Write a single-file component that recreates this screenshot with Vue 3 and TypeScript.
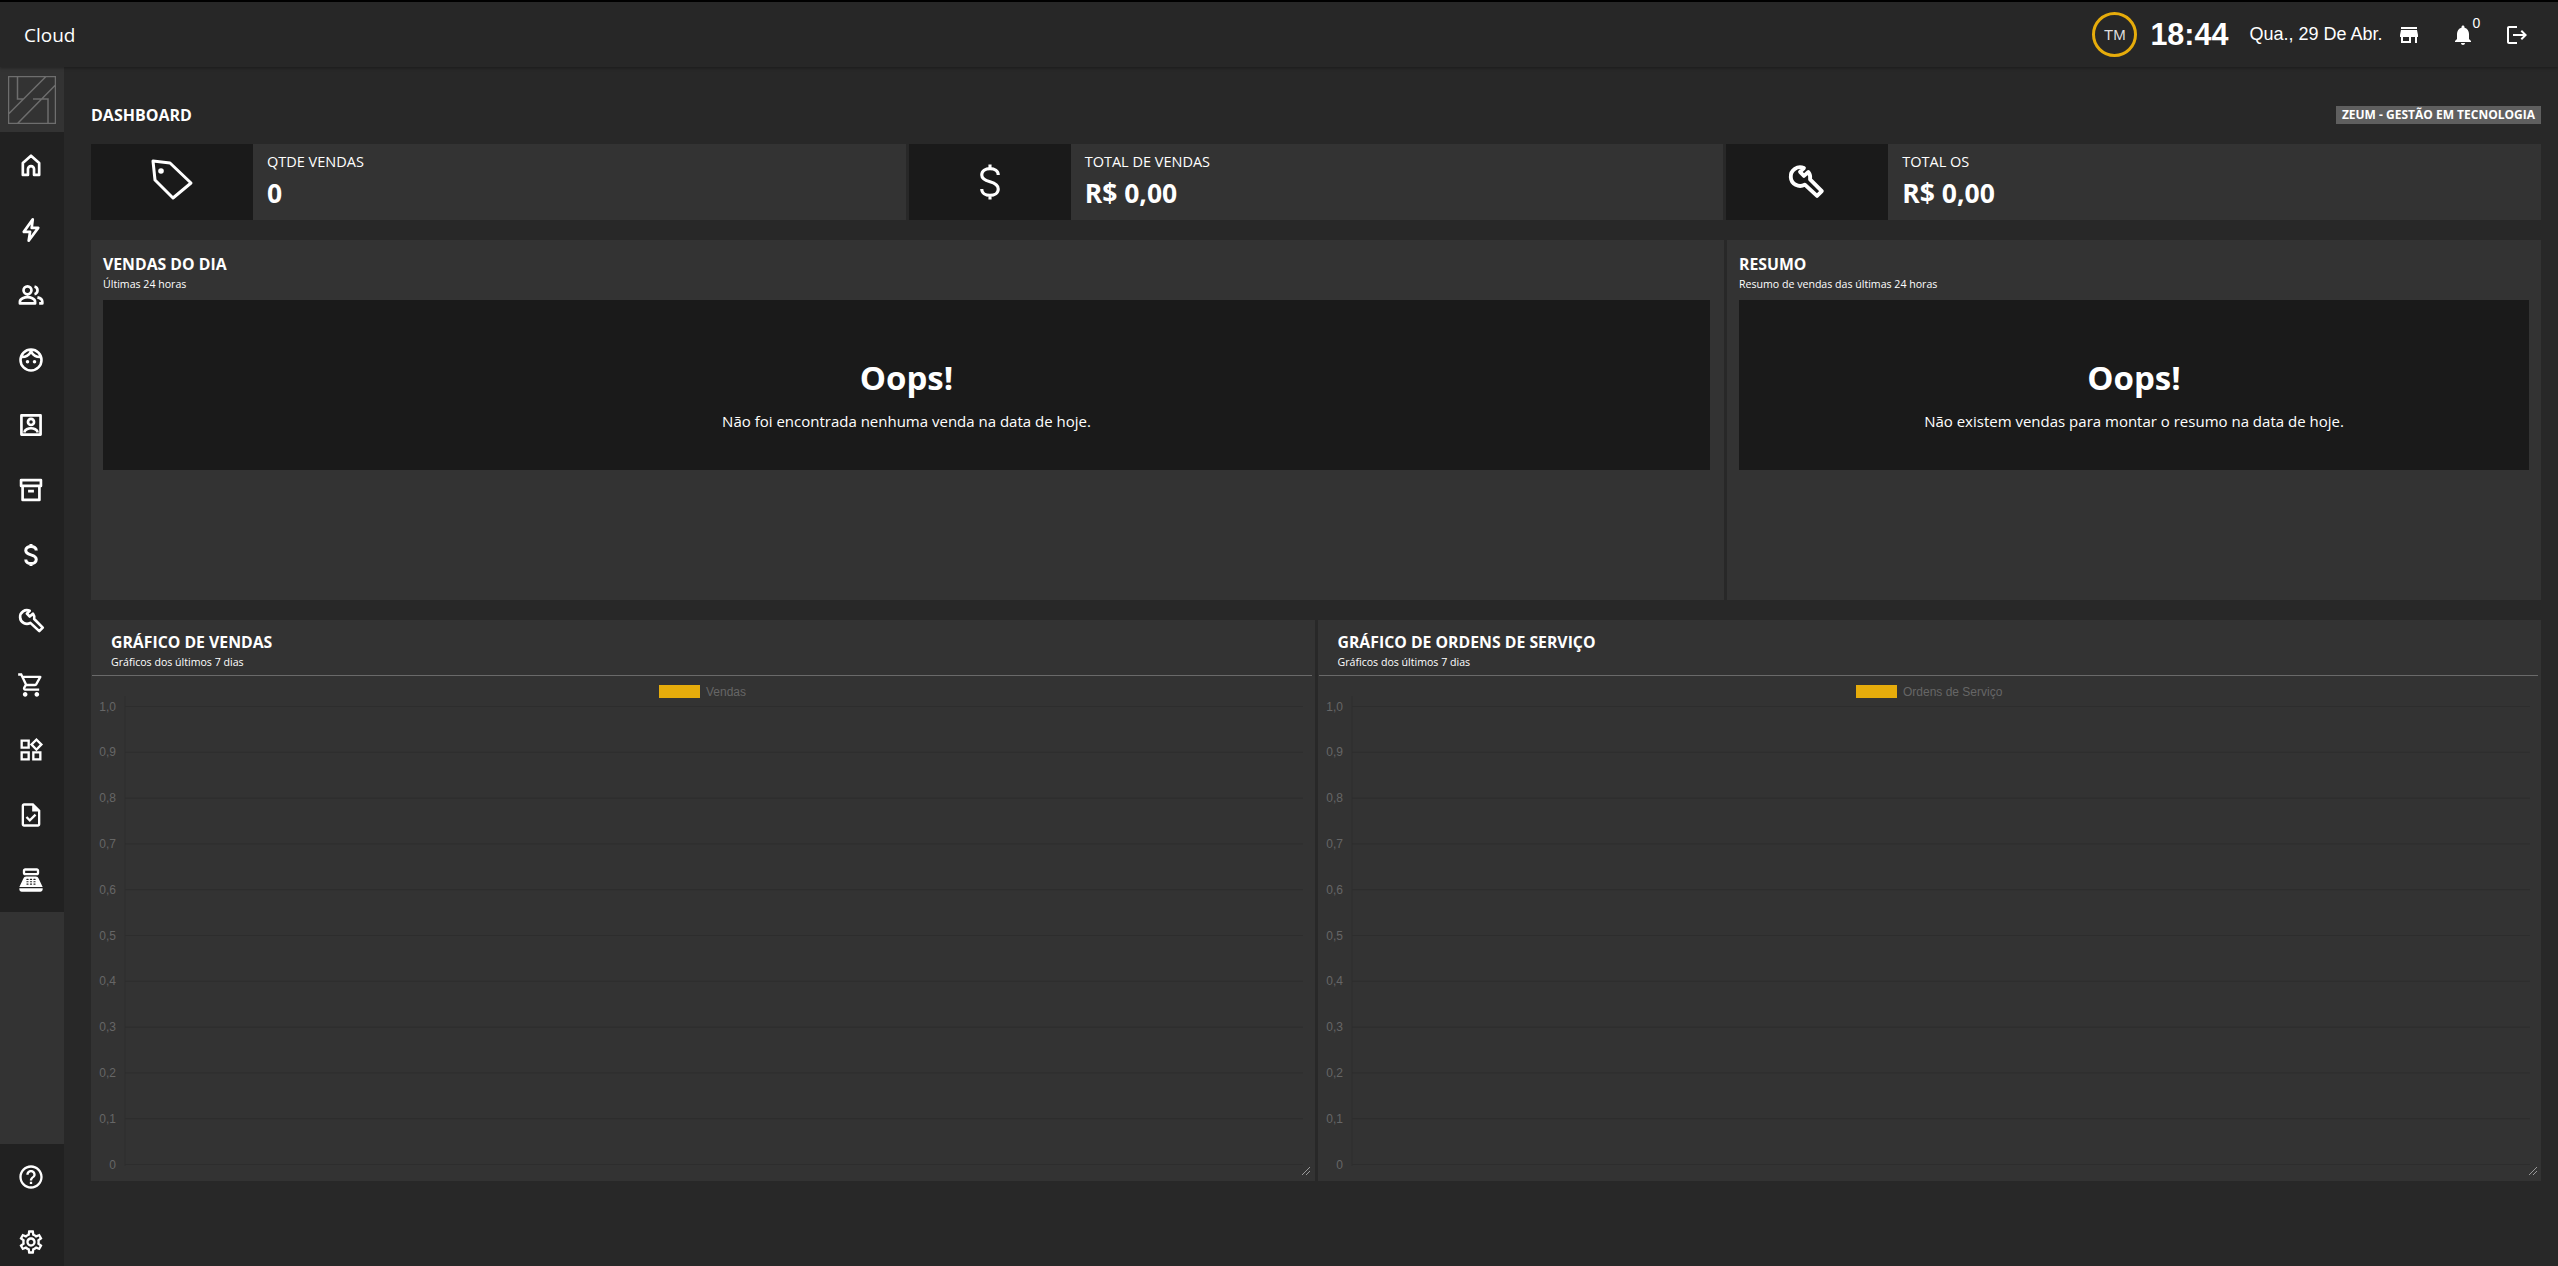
<script setup lang="ts">
interface NavIcon {
  name: string
  box?: string
  d: string
  stroke?: number
  dots?: [number, number, number][]
}

interface StatCard {
  label: string
  value: string
  icon: 'tag' | 'dollar' | 'wrench'
}

interface ChartCard {
  title: string
  legend: string
  swatchX: number
}

const wrenchPath = 'M24 11.500 L19.500 16 L24 20.500 L29 16 A10.700 10.700 0 0 1 31 24.500 L44.500 38 L39 43.500 L25 30.500 A10.700 10.700 0 1 1 24 11.500 Z'
const dollarPath = 'M16.5 8.2c0-2.2-2-3.5-4.5-3.5S7.5 6 7.5 8.2c0 2.2 2 3 4.5 3.7s4.5 1.6 4.5 3.9c0 2.2-2 3.5-4.5 3.5s-4.500-1.3-4.500-3.500M12 2.500v2.200M12 19.300v2.200'

const navTop: NavIcon[] = [
  { name: 'home', d: 'M5 20.500V10.200L12 4l7 6.200v10.300h-4.400V15.500a2.600 2.600 0 0 0-5.200 0v5z', stroke: 2.3 },
  { name: 'bolt', d: 'M13.500 2.800 5.800 13.600h5.400l-1.200 7.600 8.200-11h-5.600z', stroke: 2.3 },
  { name: 'people', d: 'M9 4.600a3.400 3.400 0 1 1 0 6.800 3.400 3.400 0 0 1 0-6.800zM2.500 19.200v-1.400c0-2.600 4.200-4 6.500-4s6.500 1.400 6.500 4v1.400zM15 4.700a3.400 3.400 0 0 1 0 6.600M17.500 14c2.200.5 4.200 1.600 4.200 3.800v1.400h-2.700', stroke: 2.3 },
  { name: 'face', d: 'M12 3a9 9 0 1 1 0 18 9 9 0 0 1 0-18zM4 9.500c3.600 0 6.400-1.500 8-5 1.600 3.500 4.400 5 8 5', stroke: 2.2, dots: [[9, 13.500, 1.500], [15, 13.500, 1.500]] },
  { name: 'portrait', d: 'M3.800 3.800h16.400v16.400H3.800zM12 6.800a2.600 2.600 0 1 1 0 5.200 2.600 2.600 0 0 1 0-5.200zM6.500 18.500v-.7c0-1.800 3.200-3 5.500-3s5.500 1.200 5.500 3v.7', stroke: 2.3 },
  { name: 'archive', d: 'M3.500 3.500h17v5h-17zM4.800 8.500v12h14.400v-12M9.500 13h5', stroke: 2.3 },
  { name: 'money', d: dollarPath, stroke: 2.6 },
  { name: 'wrench', box: '4 4 44 44', d: wrenchPath, stroke: 4.2 },
  { name: 'cart', d: 'M15.55 13c.75 0 1.41-.41 1.75-1.03l3.58-6.49c.37-.66-.11-1.48-.87-1.48H5.21l-.94-2H1v2h2l3.6 7.59-1.35 2.44C4.52 15.37 5.48 17 7 17h12v-2H7l1.1-2h7.45zM6.16 6h12.15l-2.76 5H8.53L6.16 6zM7 18c-1.1 0-1.99.9-1.99 2S5.9 22 7 22s2-.9 2-2-.9-2-2-2zm10 0c-1.1 0-1.99.9-1.99 2s.89 2 1.99 2 2-.9 2-2-.9-2-2-2z' },
  { name: 'widgets', d: 'M16.66 4.52l2.83 2.83-2.83 2.83-2.83-2.83 2.83-2.83M9 5v4H5V5h4m10 10v4h-4v-4h4M9 15v4H5v-4h4m7.66-13.31L11 7.34 16.66 13l5.66-5.66-5.66-5.65zM11 3H3v8h8V3zm10 10h-8v8h8v-8zm-10 0H3v8h8v-8z' },
  { name: 'task', d: 'M14 2H6c-1.1 0-1.99.9-1.99 2L4 20c0 1.1.89 2 1.99 2H18c1.1 0 2-.9 2-2V8l-6-6zm4 18H6V4h7v5h5v11zm-9.18-6.95L7.4 14.46 10.94 18l5.66-5.66-1.41-1.41-4.24 4.24-2.13-2.12z' },
  { name: 'register', d: 'M17 2H7C5.9 2 5 2.9 5 4v2c0 1.1.9 2 2 2h10c1.1 0 2-.9 2-2V4c0-1.1-.9-2-2-2zm0 4H7V4h10v2zm3 16H4c-1.1 0-2-.9-2-2v-1h20v1c0 1.1-.9 2-2 2zm-1.47-11.31C18.21 9.67 17.27 9 16.2 9H7.8c-1.07 0-2.01.67-2.33 1.69L2 18h20l-3.47-7.31zM9.5 16h-1a.5.5 0 0 1 0-1h1a.5.5 0 0 1 0 1zm0-2h-1a.5.5 0 0 1 0-1h1a.5.5 0 0 1 0 1zm0-2h-1a.5.5 0 0 1 0-1h1a.5.5 0 0 1 0 1zm3 4h-1a.5.5 0 0 1 0-1h1a.5.5 0 0 1 0 1zm0-2h-1a.5.5 0 0 1 0-1h1a.5.5 0 0 1 0 1zm0-2h-1a.5.5 0 0 1 0-1h1a.5.5 0 0 1 0 1zm3 4h-1a.5.5 0 0 1 0-1h1a.5.5 0 0 1 0 1zm0-2h-1a.5.5 0 0 1 0-1h1a.5.5 0 0 1 0 1zm0-2h-1a.5.5 0 0 1 0-1h1a.5.5 0 0 1 0 1z' },
]

const navBottom: NavIcon[] = [
  { name: 'help', d: 'M11 18h2v-2h-2v2zm1-16C6.48 2 2 6.48 2 12s4.48 10 10 10 10-4.48 10-10S17.52 2 12 2zm0 18c-4.41 0-8-3.59-8-8s3.59-8 8-8 8 3.59 8 8-3.59 8-8 8zm0-14c-2.21 0-4 1.79-4 4h2c0-1.1.9-2 2-2s2 .9 2 2c0 2-3 1.75-3 5h2c0-2.25 3-2.5 3-5 0-2.21-1.79-4-4-4z' },
  { name: 'settings', d: 'M19.43 12.98c.04-.32.07-.64.07-.98 0-.34-.03-.66-.07-.98l2.11-1.65c.19-.15.24-.42.12-.64l-2-3.46c-.09-.16-.26-.25-.44-.25-.06 0-.12.01-.17.03l-2.49 1c-.52-.4-1.08-.73-1.69-.98l-.38-2.65C14.46 2.18 14.25 2 14 2h-4c-.25 0-.46.18-.49.42l-.38 2.65c-.61.25-1.17.59-1.69.98l-2.49-1c-.06-.02-.12-.03-.18-.03-.17 0-.34.09-.43.25l-2 3.46c-.13.22-.07.49.12.64l2.11 1.65c-.04.32-.07.65-.07.98 0 .33.03.66.07.98l-2.11 1.65c-.19.15-.24.42-.12.64l2 3.46c.09.16.26.25.44.25.06 0 .12-.01.17-.03l2.49-1c.52.4 1.08.73 1.69.98l.38 2.65c.03.24.24.42.49.42h4c.25 0 .46-.18.49-.42l.38-2.65c.61-.25 1.17-.59 1.69-.98l2.49 1c.06.02.12.03.18.03.17 0 .34-.09.43-.25l2-3.46c.12-.22.07-.49-.12-.64l-2.11-1.65zm-1.98-1.71c.04.31.05.52.05.73 0 .21-.02.43-.05.73l-.14 1.13.89.7 1.08.84-.7 1.21-1.27-.51-1.04-.42-.9.68c-.43.32-.84.56-1.25.73l-1.06.43-.16 1.13-.2 1.35h-1.4l-.19-1.35-.16-1.13-1.06-.43c-.43-.18-.83-.41-1.23-.71l-.91-.7-1.06.43-1.27.51-.7-1.21 1.08-.84.89-.7-.14-1.13c-.03-.31-.05-.54-.05-.74s.02-.43.05-.73l.14-1.13-.89-.7-1.08-.84.7-1.21 1.27.51 1.04.42.9-.68c.43-.32.84-.56 1.25-.73l1.06-.43.16-1.13.2-1.35h1.39l.19 1.35.16 1.13 1.06.43c.43.18.83.41 1.23.71l.91.7 1.06-.43 1.27-.51.7 1.21-1.07.85-.89.7.14 1.13zM12 8c-2.21 0-4 1.79-4 4s1.79 4 4 4 4-1.79 4-4-1.79-4-4-4zm0 6c-1.1 0-2-.9-2-2s.9-2 2-2 2 .9 2 2-.9 2-2 2z' },
]

const stats: StatCard[] = [
  { label: 'QTDE VENDAS', value: '0', icon: 'tag' },
  { label: 'TOTAL DE VENDAS', value: 'R$ 0,00', icon: 'dollar' },
  { label: 'TOTAL OS', value: 'R$ 0,00', icon: 'wrench' },
]

const charts: ChartCard[] = [
  { title: 'GRÁFICO DE VENDAS', legend: 'Vendas', swatchX: 568 },
  { title: 'GRÁFICO DE ORDENS DE SERVIÇO', legend: 'Ordens de Serviço', swatchX: 538 },
]

const ticks = ['1,0', '0,9', '0,8', '0,7', '0,6', '0,5', '0,4', '0,3', '0,2', '0,1', '0'].map((label, i) => ({
  label,
  y: 30.5 + i * 45.8,
}))
</script>

<template>
  <div class="app">
    <header class="topbar">
      <span class="brand">Cloud</span>
      <div class="topbar__right">
        <span class="avatar">TM</span>
        <span class="clock">18:44</span>
        <span class="date">Qua., 29 De Abr.</span>
        <svg class="top-icon top-icon--store" viewBox="0 0 24 24"><path d="M20 4H4v2h16V4zm1 10v-2l-1-5H4l-1 5v2h1v6h10v-6h4v6h2v-6h1zm-9 4H6v-4h6v4z" /></svg>
        <span class="bell">
          <svg class="top-icon" viewBox="0 0 24 24"><path d="M12 22c1.1 0 2-.9 2-2h-4c0 1.1.89 2 2 2zm6-6v-5c0-3.07-1.64-5.64-4.5-6.32V4c0-.83-.67-1.5-1.5-1.5s-1.5.67-1.5 1.5v.68C7.63 5.36 6 7.92 6 11v5l-2 2v1h16v-1l-2-2z" /></svg>
          <sup class="bell__count">0</sup>
        </span>
        <svg class="top-icon top-icon--logout" viewBox="0 0 24 24"><path d="M17 7l-1.41 1.41L18.17 11H8v2h10.17l-2.58 2.58L17 17l5-5zM4 5h8V3H4c-1.1 0-2 .9-2 2v14c0 1.1.9 2 2 2h8v-2H4V5z" /></svg>
      </div>
    </header>

    <div class="body">
      <aside class="sidebar">
        <div class="logo">
          <svg viewBox="0 0 48 48" class="logo__mark">
            <path d="M.5.5h47v47H.5zM9.5.5v22.500h6.500M25 23h15v24.500M38 .5 .5 38M47.500 9 9.500 47.500" />
          </svg>
        </div>
        <nav class="nav">
          <div v-for="item in navTop" :key="item.name" class="nav__item">
            <svg class="nav__icon" :viewBox="item.box || '0 0 24 24'">
              <path
                :d="item.d"
                :fill="item.stroke ? 'none' : '#fff'"
                :stroke="item.stroke ? '#fff' : 'none'"
                :stroke-width="item.stroke"
                stroke-linejoin="round"
              />
              <circle v-for="(dot, i) in item.dots" :key="i" :cx="dot[0]" :cy="dot[1]" :r="dot[2]" fill="#fff" />
            </svg>
          </div>
        </nav>
        <div class="sidebar__filler"></div>
        <nav class="nav">
          <div v-for="item in navBottom" :key="item.name" class="nav__item">
            <svg class="nav__icon" viewBox="0 0 24 24"><path :d="item.d" fill="#fff" /></svg>
          </div>
        </nav>
      </aside>

      <main class="main">
        <div class="page-head">
          <h1 class="page-head__title">DASHBOARD</h1>
          <span class="page-head__badge">ZEUM - GESTÃO EM TECNOLOGIA</span>
        </div>

        <section class="stats">
          <div v-for="stat in stats" :key="stat.label" class="stat">
            <div class="stat__icon">
              <svg v-if="stat.icon === 'tag'" viewBox="0 0 55 55" class="stat__svg">
                <path d="M8 6 25 8 46 28 28 43 10 25Z" fill="none" stroke="#fff" stroke-width="3" stroke-linejoin="round" />
                <circle cx="16" cy="16" r="2.800" fill="#fff" />
              </svg>
              <svg v-else-if="stat.icon === 'dollar'" viewBox="0 0 24 24" class="stat__svg stat__svg--dollar">
                <path :d="dollarPath" fill="none" stroke="#fff" stroke-width="1.700" />
              </svg>
              <svg v-else viewBox="0 0 55 55" class="stat__svg stat__svg--wrench">
                <path :d="wrenchPath" fill="none" stroke="#fff" stroke-width="4.400" stroke-linejoin="round" />
              </svg>
            </div>
            <div class="stat__body">
              <span class="stat__label">{{ stat.label }}</span>
              <strong class="stat__value">{{ stat.value }}</strong>
            </div>
          </div>
        </section>

        <section class="panels">
          <div class="panel">
            <h2 class="panel__title">VENDAS DO DIA</h2>
            <p class="panel__sub">Últimas 24 horas</p>
            <div class="oops">
              <strong class="oops__title">Oops!</strong>
              <span class="oops__text">Não foi encontrada nenhuma venda na data de hoje.</span>
            </div>
          </div>
          <div class="panel">
            <h2 class="panel__title">RESUMO</h2>
            <p class="panel__sub">Resumo de vendas das últimas 24 horas</p>
            <div class="oops">
              <strong class="oops__title">Oops!</strong>
              <span class="oops__text">Não existem vendas para montar o resumo na data de hoje.</span>
            </div>
          </div>
        </section>

        <section class="charts">
          <div v-for="chart in charts" :key="chart.title" class="chart">
            <div class="chart__head">
              <h2 class="panel__title">{{ chart.title }}</h2>
              <p class="panel__sub">Gráficos dos últimos 7 dias</p>
            </div>
            <svg class="chart__canvas" width="1224" height="504">
              <rect :x="chart.swatchX" y="9" width="41" height="13" fill="#e6ac0b" />
              <text :x="chart.swatchX + 47" y="19.500" class="chart__legend">{{ chart.legend }}</text>
              <line x1="34" y1="20" x2="34" y2="490" stroke="#2f2f2f" />
              <template v-for="tick in ticks" :key="tick.label">
                <line x1="34" :y1="tick.y" x2="1212" :y2="tick.y" stroke="#2d2d2d" />
                <text x="25" :y="tick.y + 4" text-anchor="end" class="chart__tick">{{ tick.label }}</text>
              </template>
              <path d="M1211 499 1219 491M1215 499 1219 495" stroke="#999" fill="none" />
            </svg>
          </div>
        </section>
      </main>
    </div>
  </div>
</template>

<style scoped>
.app {
  display: flex;
  flex-direction: column;
  height: 1266px;
  overflow: hidden;
  background: #282828;
  color: #fff;
  font-family: 'Open Sans', 'Noto Sans', sans-serif;
}

.topbar {
  flex: 0 0 67px;
  box-sizing: border-box;
  display: flex;
  align-items: center;
  justify-content: space-between;
  padding: 0 29.500px 0 24px;
  background: #272727;
  border-top: 2px solid #000;
  box-shadow: 0 1px 3px rgba(0, 0, 0, 0.35);
  z-index: 1;
}

.brand {
  font-size: 19px;
  font-weight: 500;
}

.topbar__right {
  display: flex;
  align-items: center;
  font-family: 'Liberation Sans', sans-serif;
}

.avatar {
  box-sizing: border-box;
  display: flex;
  align-items: center;
  justify-content: center;
  width: 45px;
  height: 45px;
  border: 3px solid #e6ac0b;
  border-radius: 50%;
  font-size: 15px;
  color: #ddd;
}

.clock {
  margin-left: 13px;
  font-size: 30.500px;
  font-weight: 700;
}

.date {
  margin-left: 21px;
  font-size: 18px;
}

.top-icon {
  display: block;
  width: 24px;
  height: 24px;
  fill: #fff;
}

.top-icon--store {
  margin-left: 14px;
}

.top-icon--logout {
  margin-left: 30px;
}

.bell {
  display: flex;
  margin-left: 30px;
  position: relative;
}

.bell__count {
  position: absolute;
  left: 22px;
  top: -7px;
  font-size: 14px;
  line-height: 1;
}

.body {
  flex: 1;
  display: flex;
  min-height: 0;
}

.sidebar {
  flex: 0 0 64px;
  background: #212121;
}

.logo {
  display: flex;
  align-items: center;
  justify-content: center;
  height: 65px;
  background: #333;
}

.logo__mark {
  width: 48px;
  height: 48px;
  margin-right: 1px;
  fill: none;
  stroke: #6e6e6e;
  stroke-width: 1.5;
}

.nav__item {
  display: flex;
  align-items: center;
  justify-content: center;
  height: 65px;
  padding-right: 2px;
}

.nav__icon {
  width: 28px;
  height: 28px;
}

.sidebar__filler {
  height: 232px;
  background: #333;
}

.main {
  flex: 1;
  min-width: 0;
  box-sizing: border-box;
  padding: 37px 17px 0 27px;
}

.page-head {
  display: flex;
  align-items: center;
  justify-content: space-between;
  height: 22px;
  margin-bottom: 18px;
}

.page-head__title {
  margin: 0;
  font-size: 16px;
  font-weight: 700;
}

.page-head__badge {
  padding: 0 6px;
  background: #5f5f5f;
  font-size: 12px;
  font-weight: 700;
  line-height: 18px;
}

.stats {
  display: grid;
  grid-template-columns: repeat(3, 1fr);
  gap: 3px;
  margin-bottom: 20px;
}

.stat {
  display: flex;
  height: 76px;
  background: #333;
}

.stat__icon {
  flex: 0 0 162px;
  display: flex;
  align-items: center;
  justify-content: center;
  background: #1a1a1a;
}

.stat__svg {
  width: 55px;
  height: 55px;
}

.stat__svg--dollar {
  width: 44px;
  height: 44px;
}

.stat__svg--wrench {
  width: 48px;
  height: 48px;
}

.stat__body {
  display: flex;
  flex-direction: column;
  padding: 6px 14px;
}

.stat__label {
  font-size: 14.500px;
  line-height: 24px;
}

.stat__value {
  font-size: 26.500px;
  line-height: 39px;
}

.panels {
  display: grid;
  grid-template-columns: 1633px 1fr;
  gap: 3px;
  margin-bottom: 20px;
}

.panel {
  box-sizing: border-box;
  height: 360px;
  padding: 14px 12px;
  background: #333;
}

.panel:first-child {
  padding-right: 14px;
}

.panel__title {
  margin: 0;
  font-size: 15.800px;
  font-weight: 700;
  line-height: 21px;
}

.panel__sub {
  margin: 0;
  font-size: 10.600px;
  line-height: 18px;
}

.oops {
  display: flex;
  flex-direction: column;
  align-items: center;
  height: 170px;
  margin-top: 7px;
  padding-top: 56px;
  box-sizing: border-box;
  background: #1a1a1a;
}

.oops__title {
  font-size: 33px;
  line-height: 44px;
}

.oops__text {
  margin-top: 10px;
  font-size: 15px;
  line-height: 22px;
}

.charts {
  display: grid;
  grid-template-columns: 1fr 1fr;
  gap: 3px;
}

.chart {
  height: 561px;
  overflow: hidden;
  background: #333;
}

.chart__head {
  box-sizing: border-box;
  height: 56px;
  margin: 0 3px 0 1px;
  padding: 12px 19px 0;
  border-bottom: 1px solid #6a6a6a;
}

.chart__canvas {
  display: block;
}

.chart__legend,
.chart__tick {
  font-family: 'Liberation Sans', sans-serif;
  font-size: 12px;
  fill: #666;
}
</style>

<style>
html,
body {
  margin: 0;
  background: #282828;
}
</style>
